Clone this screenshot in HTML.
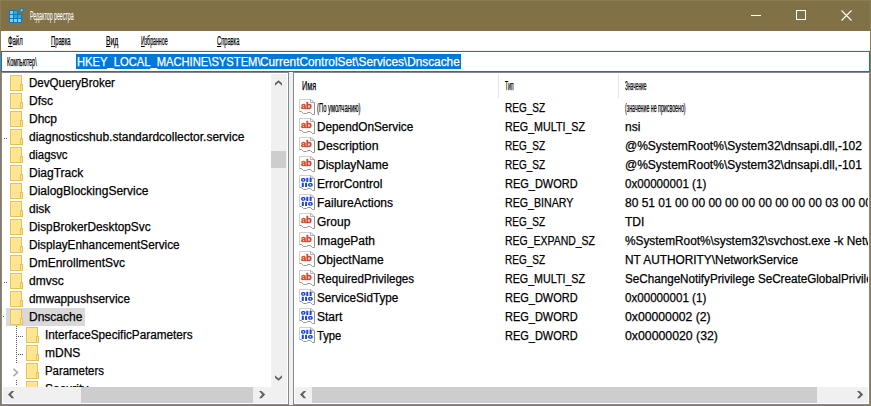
<!DOCTYPE html>
<html><head><meta charset="utf-8">
<style>
*{margin:0;padding:0;box-sizing:border-box}
html,body{width:871px;height:406px;overflow:hidden;background:#8a7d55}
#tb{position:absolute;left:1px;top:1px;width:869px;height:30px;background:#807246}
body{position:relative;font-family:"Liberation Sans",sans-serif;font-size:12px;color:#000}
.a{position:absolute}
.t{position:absolute;white-space:nowrap;line-height:14px;-webkit-text-stroke:0.25px currentColor}
u{text-decoration:underline;text-underline-offset:1px;text-decoration-thickness:1px}
.clip{position:absolute;overflow:hidden}
</style></head><body><div id="tb"></div>

<svg class="a" style="left:0;top:0" width="30" height="30"><path d="M9 10 H18 V14 H22 V23 H9 Z" fill="#1479bb"/><rect x="10" y="11" width="3" height="3" fill="#74d3fa"/><rect x="14" y="11" width="3" height="3" fill="#2aaee6"/><rect x="10" y="15" width="3" height="3" fill="#74d3fa"/><rect x="14" y="15" width="3" height="3" fill="#24a9e2"/><rect x="18" y="15" width="3" height="3" fill="#2aaee6"/><rect x="10" y="19" width="3" height="3" fill="#74d3fa"/><rect x="14" y="19" width="3" height="3" fill="#74d3fa"/><rect x="18" y="19" width="3" height="3" fill="#74d3fa"/><polygon points="21.7,7.4 24.6,10.3 21.7,13.2 18.8,10.3" fill="#1479bb"/><polygon points="21.7,8.8 23.2,10.3 21.7,11.8 20.2,10.3" fill="#74d3fa"/></svg>
<div class="t" style="left:30px;top:9px;color:#fff;-webkit-text-stroke:0.1px #fff;transform:scaleX(0.4364);transform-origin:0 0">Редактор реестра</div>
<div class="a" style="left:751px;top:15px;width:10px;height:1px;background:#fff"></div>
<div class="a" style="left:796px;top:10px;width:10px;height:10px;border:1px solid #fff"></div>
<svg class="a" style="left:841px;top:10px" width="11" height="11" viewBox="0 0 11 11"><path d="M0.5 0.5 L10.5 10.5 M10.5 0.5 L0.5 10.5" stroke="#fff" stroke-width="1.1"/></svg>
<div class="a" style="left:1px;top:31px;width:869px;height:374px;background:#fff"></div>
<div class="a" style="left:1px;top:50px;width:869px;height:1px;background:#f0f0f0"></div>
<div class="t" style="left:8px;top:34px;transform:scaleX(0.4982);transform-origin:0 0"><u>Ф</u>айл</div>
<div class="t" style="left:51px;top:34px;transform:scaleX(0.4821);transform-origin:0 0"><u>П</u>равка</div>
<div class="t" style="left:106px;top:34px;transform:scaleX(0.5667);transform-origin:0 0"><u>В</u>ид</div>
<div class="t" style="left:141px;top:34px;transform:scaleX(0.4376);transform-origin:0 0"><u>И</u>збранное</div>
<div class="t" style="left:217px;top:34px;transform:scaleX(0.4760);transform-origin:0 0"><u>С</u>правка</div>
<div class="a" style="left:1px;top:51px;width:869px;height:21px;border:1px solid #0078d7"></div>
<div class="t" style="left:7px;top:55px;transform:scaleX(0.4530);transform-origin:0 0">Компьютер\</div>
<div class="a" style="left:76px;top:54px;width:385px;height:15px;background:#0078d7"></div>
<div class="t" style="left:76.5px;top:55px;color:#fff;transform:scaleX(0.933);transform-origin:0 0">HKEY_LOCAL_MACHINE\SYSTEM\</div>
<div class="t" style="left:260px;top:55px;color:#fff;transform:scaleX(0.985);transform-origin:0 0">CurrentControlSet\Services\Dnscache</div>
<div class="a" style="left:1px;top:72px;width:288px;height:333px;background:#828790"></div>
<div class="a" style="left:2px;top:73px;width:286px;height:331px;background:#fff"></div>
<div class="a" style="left:289px;top:72px;width:4px;height:333px;background:#f0f0f0"></div>
<div class="a" style="left:293px;top:72px;width:577px;height:333px;background:#828790"></div>
<div class="a" style="left:294px;top:73px;width:575px;height:331px;background:#fff"></div>
<div class="clip" style="left:3px;top:74px;width:268px;height:313px">
<svg class="a" style="left:7px;top:1px" width="13" height="16"><rect x="0.5" y="0.5" width="11" height="15" fill="#fde594" stroke="#e7c153"/><rect x="1.5" y="1.5" width="9" height="13" fill="none" stroke="#fee9a4" stroke-width="0.6"/><rect x="10.5" y="9.5" width="2" height="6" fill="#fde594" stroke="#e7c153"/></svg>
<div class="t" style="left:26px;top:2px;transform:scaleX(0.9618);transform-origin:0 0">DevQueryBroker</div>
<svg class="a" style="left:7px;top:19px" width="13" height="16"><rect x="0.5" y="0.5" width="11" height="15" fill="#fde594" stroke="#e7c153"/><rect x="1.5" y="1.5" width="9" height="13" fill="none" stroke="#fee9a4" stroke-width="0.6"/><rect x="10.5" y="9.5" width="2" height="6" fill="#fde594" stroke="#e7c153"/></svg>
<div class="t" style="left:26px;top:20px">Dfsc</div>
<svg class="a" style="left:7px;top:37px" width="13" height="16"><rect x="0.5" y="0.5" width="11" height="15" fill="#fde594" stroke="#e7c153"/><rect x="1.5" y="1.5" width="9" height="13" fill="none" stroke="#fee9a4" stroke-width="0.6"/><rect x="10.5" y="9.5" width="2" height="6" fill="#fde594" stroke="#e7c153"/></svg>
<div class="t" style="left:26px;top:38px">Dhcp</div>
<svg class="a" style="left:7px;top:55px" width="13" height="16"><rect x="0.5" y="0.5" width="11" height="15" fill="#fde594" stroke="#e7c153"/><rect x="1.5" y="1.5" width="9" height="13" fill="none" stroke="#fee9a4" stroke-width="0.6"/><rect x="10.5" y="9.5" width="2" height="6" fill="#fde594" stroke="#e7c153"/></svg>
<div class="t" style="left:26px;top:56px">diagnosticshub.standardcollector.service</div>
<svg class="a" style="left:7px;top:73px" width="13" height="16"><rect x="0.5" y="0.5" width="11" height="15" fill="#fde594" stroke="#e7c153"/><rect x="1.5" y="1.5" width="9" height="13" fill="none" stroke="#fee9a4" stroke-width="0.6"/><rect x="10.5" y="9.5" width="2" height="6" fill="#fde594" stroke="#e7c153"/></svg>
<div class="t" style="left:26px;top:74px;transform:scaleX(0.9463);transform-origin:0 0">diagsvc</div>
<svg class="a" style="left:7px;top:91px" width="13" height="16"><rect x="0.5" y="0.5" width="11" height="15" fill="#fde594" stroke="#e7c153"/><rect x="1.5" y="1.5" width="9" height="13" fill="none" stroke="#fee9a4" stroke-width="0.6"/><rect x="10.5" y="9.5" width="2" height="6" fill="#fde594" stroke="#e7c153"/></svg>
<div class="t" style="left:26px;top:92px">DiagTrack</div>
<svg class="a" style="left:7px;top:109px" width="13" height="16"><rect x="0.5" y="0.5" width="11" height="15" fill="#fde594" stroke="#e7c153"/><rect x="1.5" y="1.5" width="9" height="13" fill="none" stroke="#fee9a4" stroke-width="0.6"/><rect x="10.5" y="9.5" width="2" height="6" fill="#fde594" stroke="#e7c153"/></svg>
<div class="t" style="left:26px;top:110px">DialogBlockingService</div>
<svg class="a" style="left:7px;top:127px" width="13" height="16"><rect x="0.5" y="0.5" width="11" height="15" fill="#fde594" stroke="#e7c153"/><rect x="1.5" y="1.5" width="9" height="13" fill="none" stroke="#fee9a4" stroke-width="0.6"/><rect x="10.5" y="9.5" width="2" height="6" fill="#fde594" stroke="#e7c153"/></svg>
<div class="t" style="left:26px;top:128px">disk</div>
<svg class="a" style="left:7px;top:145px" width="13" height="16"><rect x="0.5" y="0.5" width="11" height="15" fill="#fde594" stroke="#e7c153"/><rect x="1.5" y="1.5" width="9" height="13" fill="none" stroke="#fee9a4" stroke-width="0.6"/><rect x="10.5" y="9.5" width="2" height="6" fill="#fde594" stroke="#e7c153"/></svg>
<div class="t" style="left:26px;top:146px;transform:scaleX(0.9852);transform-origin:0 0">DispBrokerDesktopSvc</div>
<svg class="a" style="left:7px;top:163px" width="13" height="16"><rect x="0.5" y="0.5" width="11" height="15" fill="#fde594" stroke="#e7c153"/><rect x="1.5" y="1.5" width="9" height="13" fill="none" stroke="#fee9a4" stroke-width="0.6"/><rect x="10.5" y="9.5" width="2" height="6" fill="#fde594" stroke="#e7c153"/></svg>
<div class="t" style="left:26px;top:164px;transform:scaleX(0.9816);transform-origin:0 0">DisplayEnhancementService</div>
<svg class="a" style="left:7px;top:181px" width="13" height="16"><rect x="0.5" y="0.5" width="11" height="15" fill="#fde594" stroke="#e7c153"/><rect x="1.5" y="1.5" width="9" height="13" fill="none" stroke="#fee9a4" stroke-width="0.6"/><rect x="10.5" y="9.5" width="2" height="6" fill="#fde594" stroke="#e7c153"/></svg>
<div class="t" style="left:26px;top:182px">DmEnrollmentSvc</div>
<svg class="a" style="left:7px;top:199px" width="13" height="16"><rect x="0.5" y="0.5" width="11" height="15" fill="#fde594" stroke="#e7c153"/><rect x="1.5" y="1.5" width="9" height="13" fill="none" stroke="#fee9a4" stroke-width="0.6"/><rect x="10.5" y="9.5" width="2" height="6" fill="#fde594" stroke="#e7c153"/></svg>
<div class="t" style="left:26px;top:200px">dmvsc</div>
<svg class="a" style="left:7px;top:217px" width="13" height="16"><rect x="0.5" y="0.5" width="11" height="15" fill="#fde594" stroke="#e7c153"/><rect x="1.5" y="1.5" width="9" height="13" fill="none" stroke="#fee9a4" stroke-width="0.6"/><rect x="10.5" y="9.5" width="2" height="6" fill="#fde594" stroke="#e7c153"/></svg>
<div class="t" style="left:26px;top:218px;transform:scaleX(0.9835);transform-origin:0 0">dmwappushservice</div>
<div class="a" style="left:3px;top:234px;width:79px;height:18px;background:#d9d9d9"></div>
<svg class="a" style="left:7px;top:235px" width="13" height="16"><rect x="0.5" y="0.5" width="11" height="15" fill="#fde594" stroke="#e7c153"/><rect x="1.5" y="1.5" width="9" height="13" fill="none" stroke="#fee9a4" stroke-width="0.6"/><rect x="10.5" y="9.5" width="2" height="6" fill="#fde594" stroke="#e7c153"/></svg>
<div class="t" style="left:26px;top:236px">Dnscache</div>
<svg class="a" style="left:23px;top:253px" width="13" height="16"><rect x="0.5" y="0.5" width="11" height="15" fill="#fde594" stroke="#e7c153"/><rect x="1.5" y="1.5" width="9" height="13" fill="none" stroke="#fee9a4" stroke-width="0.6"/><rect x="10.5" y="9.5" width="2" height="6" fill="#fde594" stroke="#e7c153"/></svg>
<div class="t" style="left:42px;top:254px;transform:scaleX(0.9793);transform-origin:0 0">InterfaceSpecificParameters</div>
<svg class="a" style="left:23px;top:271px" width="13" height="16"><rect x="0.5" y="0.5" width="11" height="15" fill="#fde594" stroke="#e7c153"/><rect x="1.5" y="1.5" width="9" height="13" fill="none" stroke="#fee9a4" stroke-width="0.6"/><rect x="10.5" y="9.5" width="2" height="6" fill="#fde594" stroke="#e7c153"/></svg>
<div class="t" style="left:42px;top:272px">mDNS</div>
<svg class="a" style="left:23px;top:289px" width="13" height="16"><rect x="0.5" y="0.5" width="11" height="15" fill="#fde594" stroke="#e7c153"/><rect x="1.5" y="1.5" width="9" height="13" fill="none" stroke="#fee9a4" stroke-width="0.6"/><rect x="10.5" y="9.5" width="2" height="6" fill="#fde594" stroke="#e7c153"/></svg>
<div class="t" style="left:42px;top:290px;transform:scaleX(0.9508);transform-origin:0 0">Parameters</div>
<svg class="a" style="left:23px;top:307px" width="13" height="16"><rect x="0.5" y="0.5" width="11" height="15" fill="#fde594" stroke="#e7c153"/><rect x="1.5" y="1.5" width="9" height="13" fill="none" stroke="#fee9a4" stroke-width="0.6"/><rect x="10.5" y="9.5" width="2" height="6" fill="#fde594" stroke="#e7c153"/></svg>
<div class="t" style="left:42px;top:308px">Security</div>
<div class="a" style="left:1px;top:64px;width:1px;height:1px;background:#5a5a5a"></div>
<div class="a" style="left:3px;top:64px;width:1px;height:1px;background:#5a5a5a"></div>
<div class="a" style="left:1px;top:208px;width:1px;height:1px;background:#5a5a5a"></div>
<div class="a" style="left:3px;top:208px;width:1px;height:1px;background:#5a5a5a"></div>
<div class="a" style="left:0px;top:242px;width:1px;height:1px;background:#5a5a5a"></div>
<div class="a" style="left:13px;top:252px;width:1px;height:1px;background:#5a5a5a"></div>
<div class="a" style="left:13px;top:254px;width:1px;height:1px;background:#5a5a5a"></div>
<div class="a" style="left:13px;top:256px;width:1px;height:1px;background:#5a5a5a"></div>
<div class="a" style="left:13px;top:258px;width:1px;height:1px;background:#5a5a5a"></div>
<div class="a" style="left:13px;top:260px;width:1px;height:1px;background:#5a5a5a"></div>
<div class="a" style="left:13px;top:262px;width:1px;height:1px;background:#5a5a5a"></div>
<div class="a" style="left:13px;top:264px;width:1px;height:1px;background:#5a5a5a"></div>
<div class="a" style="left:13px;top:266px;width:1px;height:1px;background:#5a5a5a"></div>
<div class="a" style="left:13px;top:268px;width:1px;height:1px;background:#5a5a5a"></div>
<div class="a" style="left:13px;top:270px;width:1px;height:1px;background:#5a5a5a"></div>
<div class="a" style="left:13px;top:272px;width:1px;height:1px;background:#5a5a5a"></div>
<div class="a" style="left:13px;top:274px;width:1px;height:1px;background:#5a5a5a"></div>
<div class="a" style="left:13px;top:276px;width:1px;height:1px;background:#5a5a5a"></div>
<div class="a" style="left:13px;top:278px;width:1px;height:1px;background:#5a5a5a"></div>
<div class="a" style="left:13px;top:280px;width:1px;height:1px;background:#5a5a5a"></div>
<div class="a" style="left:13px;top:282px;width:1px;height:1px;background:#5a5a5a"></div>
<div class="a" style="left:13px;top:284px;width:1px;height:1px;background:#5a5a5a"></div>
<div class="a" style="left:13px;top:286px;width:1px;height:1px;background:#5a5a5a"></div>
<div class="a" style="left:13px;top:288px;width:1px;height:1px;background:#5a5a5a"></div>
<div class="a" style="left:13px;top:306px;width:1px;height:1px;background:#5a5a5a"></div>
<div class="a" style="left:13px;top:308px;width:1px;height:1px;background:#5a5a5a"></div>
<div class="a" style="left:13px;top:310px;width:1px;height:1px;background:#5a5a5a"></div>
<div class="a" style="left:15px;top:262px;width:1px;height:1px;background:#5a5a5a"></div>
<div class="a" style="left:17px;top:262px;width:1px;height:1px;background:#5a5a5a"></div>
<div class="a" style="left:19px;top:262px;width:1px;height:1px;background:#5a5a5a"></div>
<div class="a" style="left:15px;top:280px;width:1px;height:1px;background:#5a5a5a"></div>
<div class="a" style="left:17px;top:280px;width:1px;height:1px;background:#5a5a5a"></div>
<div class="a" style="left:19px;top:280px;width:1px;height:1px;background:#5a5a5a"></div>
<svg class="a" style="left:10px;top:294px" width="8" height="10"><polygon points="0,1.5 1,0.3 5.6,4.5 1,8.7 0,7.5 3.4,4.5" fill="#a6a6a6"/></svg>
</div>
<div class="a" style="left:271px;top:74px;width:16px;height:329px;background:#f0f0f0"></div>
<div class="a" style="left:271px;top:151px;width:15px;height:17px;background:#cdcdcd"></div>
<div class="a" style="left:3px;top:387px;width:268px;height:16px;background:#f0f0f0"></div>
<div class="a" style="left:81px;top:387px;width:172px;height:16px;background:#cdcdcd"></div>
<svg class="a" style="left:275px;top:80px" width="7" height="6"><polygon points="0,3.3 3.5,0.2 7,3.3 7,5.8 3.5,2.6 0,5.8" fill="#606060"/></svg>
<svg class="a" style="left:275px;top:375px" width="7" height="6"><polygon points="0,0.2 3.5,3.4 7,0.2 7,2.7 3.5,5.8 0,2.7" fill="#606060"/></svg>
<svg class="a" style="left:8px;top:391px" width="7" height="8"><polygon points="6.2,0 3,3.6 6.2,7.2 3.7,7.2 0,3.6 3.7,0" fill="#606060"/></svg>
<svg class="a" style="left:259px;top:391px" width="7" height="8"><polygon points="0,0 3.2,3.6 0,7.2 2.5,7.2 6.2,3.6 2.5,0" fill="#606060"/></svg>
<div class="clip" style="left:295px;top:74px;width:573px;height:313px">
<div class="t" style="left:6.5px;top:5px;transform:scaleX(0.6051);transform-origin:0 0">Имя</div>
<div class="a" style="left:203px;top:0px;width:1px;height:24px;background:#e5e5e5"></div>
<div class="t" style="left:210px;top:5px;transform:scaleX(0.4318);transform-origin:0 0">Тип</div>
<div class="a" style="left:323px;top:0px;width:1px;height:24px;background:#e5e5e5"></div>
<div class="t" style="left:330px;top:5px;transform:scaleX(0.4031);transform-origin:0 0">Значение</div>
<svg class="a" style="left:4px;top:25px" width="16" height="16" viewBox="0 0 16 16"><path d="M0 0 H12 L16 4 V16 L13.5 15.5 L11.5 13.5 L9 13.5 L7.5 14.5 L4.5 14.5 L2.5 12.5 H0 Z" fill="#fff"/><path d="M0.5 12.5 V0.5 H12" fill="none" stroke="#d0d0d0"/><path d="M12 0.5 L15.5 4" fill="none" stroke="#a0a0a0"/><path d="M11.5 0.5 V3.5 H15" fill="none" stroke="#b0b0b0"/><path d="M15.5 3.5 V15.5 H13.5 L11.5 13.5 H9 L7.5 14.5 H4.5 L2.5 12.5 H0.5" fill="none" stroke="#959595"/><text x="2" y="10" font-family="Liberation Sans" font-weight="bold" font-size="9.4" fill="#d0401a" stroke="#d0401a" stroke-width="0.35" letter-spacing="-0.25">ab</text></svg>
<div class="t" style="left:22px;top:27px;transform:scaleX(0.4879);transform-origin:0 0">(По умолчанию)</div>
<div class="t" style="left:210px;top:27px;transform:scaleX(0.8340);transform-origin:0 0">REG_SZ</div>
<div class="t" style="left:330px;top:27px;transform:scaleX(0.4387);transform-origin:0 0">(значение не присвоено)</div>
<svg class="a" style="left:4px;top:44px" width="16" height="16" viewBox="0 0 16 16"><path d="M0 0 H12 L16 4 V16 L13.5 15.5 L11.5 13.5 L9 13.5 L7.5 14.5 L4.5 14.5 L2.5 12.5 H0 Z" fill="#fff"/><path d="M0.5 12.5 V0.5 H12" fill="none" stroke="#d0d0d0"/><path d="M12 0.5 L15.5 4" fill="none" stroke="#a0a0a0"/><path d="M11.5 0.5 V3.5 H15" fill="none" stroke="#b0b0b0"/><path d="M15.5 3.5 V15.5 H13.5 L11.5 13.5 H9 L7.5 14.5 H4.5 L2.5 12.5 H0.5" fill="none" stroke="#959595"/><text x="2" y="10" font-family="Liberation Sans" font-weight="bold" font-size="9.4" fill="#d0401a" stroke="#d0401a" stroke-width="0.35" letter-spacing="-0.25">ab</text></svg>
<div class="t" style="left:22px;top:46px;transform:scaleX(0.9814);transform-origin:0 0">DependOnService</div>
<div class="t" style="left:210px;top:46px;transform:scaleX(0.8910);transform-origin:0 0">REG_MULTI_SZ</div>
<div class="t" style="left:330px;top:46px">nsi</div>
<svg class="a" style="left:4px;top:63px" width="16" height="16" viewBox="0 0 16 16"><path d="M0 0 H12 L16 4 V16 L13.5 15.5 L11.5 13.5 L9 13.5 L7.5 14.5 L4.5 14.5 L2.5 12.5 H0 Z" fill="#fff"/><path d="M0.5 12.5 V0.5 H12" fill="none" stroke="#d0d0d0"/><path d="M12 0.5 L15.5 4" fill="none" stroke="#a0a0a0"/><path d="M11.5 0.5 V3.5 H15" fill="none" stroke="#b0b0b0"/><path d="M15.5 3.5 V15.5 H13.5 L11.5 13.5 H9 L7.5 14.5 H4.5 L2.5 12.5 H0.5" fill="none" stroke="#959595"/><text x="2" y="10" font-family="Liberation Sans" font-weight="bold" font-size="9.4" fill="#d0401a" stroke="#d0401a" stroke-width="0.35" letter-spacing="-0.25">ab</text></svg>
<div class="t" style="left:22px;top:65px;transform:scaleX(1.0254);transform-origin:0 0">Description</div>
<div class="t" style="left:210px;top:65px;transform:scaleX(0.8340);transform-origin:0 0">REG_SZ</div>
<div class="t" style="left:330px;top:65px">@%SystemRoot%\System32\dnsapi.dll,-102</div>
<svg class="a" style="left:4px;top:82px" width="16" height="16" viewBox="0 0 16 16"><path d="M0 0 H12 L16 4 V16 L13.5 15.5 L11.5 13.5 L9 13.5 L7.5 14.5 L4.5 14.5 L2.5 12.5 H0 Z" fill="#fff"/><path d="M0.5 12.5 V0.5 H12" fill="none" stroke="#d0d0d0"/><path d="M12 0.5 L15.5 4" fill="none" stroke="#a0a0a0"/><path d="M11.5 0.5 V3.5 H15" fill="none" stroke="#b0b0b0"/><path d="M15.5 3.5 V15.5 H13.5 L11.5 13.5 H9 L7.5 14.5 H4.5 L2.5 12.5 H0.5" fill="none" stroke="#959595"/><text x="2" y="10" font-family="Liberation Sans" font-weight="bold" font-size="9.4" fill="#d0401a" stroke="#d0401a" stroke-width="0.35" letter-spacing="-0.25">ab</text></svg>
<div class="t" style="left:22px;top:84px">DisplayName</div>
<div class="t" style="left:210px;top:84px;transform:scaleX(0.8340);transform-origin:0 0">REG_SZ</div>
<div class="t" style="left:330px;top:84px">@%SystemRoot%\System32\dnsapi.dll,-101</div>
<svg class="a" style="left:4px;top:101px" width="16" height="16" viewBox="0 0 16 16"><path d="M0 0 H12 L16 4 V16 L13.5 15.5 L11.5 13.5 L9 13.5 L7.5 14.5 L4.5 14.5 L2.5 12.5 H0 Z" fill="#fff"/><path d="M0.5 12.5 V0.5 H12" fill="none" stroke="#d0d0d0"/><path d="M12 0.5 L15.5 4" fill="none" stroke="#a0a0a0"/><path d="M11.5 0.5 V3.5 H15" fill="none" stroke="#b0b0b0"/><path d="M15.5 3.5 V15.5 H13.5 L11.5 13.5 H9 L7.5 14.5 H4.5 L2.5 12.5 H0.5" fill="none" stroke="#959595"/><g fill="#1a45d6"><rect x="2" y="3" width="4.6" height="3.8" rx="1.7"/><rect x="7.3" y="2.8" width="2" height="4.2"/><rect x="10.6" y="2.8" width="2" height="4.2"/><rect x="2.8" y="7.8" width="2" height="4.2"/><rect x="6.1" y="7.8" width="2" height="4.2"/><rect x="9" y="8" width="4.8" height="3.8" rx="1.7"/></g><g fill="#fff"><rect x="3.6" y="4.3" width="1.4" height="1.2"/><rect x="10.7" y="9.3" width="1.4" height="1.2"/></g></svg>
<div class="t" style="left:22px;top:103px">ErrorControl</div>
<div class="t" style="left:210px;top:103px;transform:scaleX(0.9154);transform-origin:0 0">REG_DWORD</div>
<div class="t" style="left:330px;top:103px;transform:scaleX(0.9667);transform-origin:0 0">0x00000001 (1)</div>
<svg class="a" style="left:4px;top:120px" width="16" height="16" viewBox="0 0 16 16"><path d="M0 0 H12 L16 4 V16 L13.5 15.5 L11.5 13.5 L9 13.5 L7.5 14.5 L4.5 14.5 L2.5 12.5 H0 Z" fill="#fff"/><path d="M0.5 12.5 V0.5 H12" fill="none" stroke="#d0d0d0"/><path d="M12 0.5 L15.5 4" fill="none" stroke="#a0a0a0"/><path d="M11.5 0.5 V3.5 H15" fill="none" stroke="#b0b0b0"/><path d="M15.5 3.5 V15.5 H13.5 L11.5 13.5 H9 L7.5 14.5 H4.5 L2.5 12.5 H0.5" fill="none" stroke="#959595"/><g fill="#1a45d6"><rect x="2" y="3" width="4.6" height="3.8" rx="1.7"/><rect x="7.3" y="2.8" width="2" height="4.2"/><rect x="10.6" y="2.8" width="2" height="4.2"/><rect x="2.8" y="7.8" width="2" height="4.2"/><rect x="6.1" y="7.8" width="2" height="4.2"/><rect x="9" y="8" width="4.8" height="3.8" rx="1.7"/></g><g fill="#fff"><rect x="3.6" y="4.3" width="1.4" height="1.2"/><rect x="10.7" y="9.3" width="1.4" height="1.2"/></g></svg>
<div class="t" style="left:22px;top:122px">FailureActions</div>
<div class="t" style="left:210px;top:122px;transform:scaleX(0.8868);transform-origin:0 0">REG_BINARY</div>
<div class="t" style="left:330px;top:122px">80 51 01 00 00 00 00 00 00 00 00 00 03 00 00 00 14 00 00 00</div>
<svg class="a" style="left:4px;top:139px" width="16" height="16" viewBox="0 0 16 16"><path d="M0 0 H12 L16 4 V16 L13.5 15.5 L11.5 13.5 L9 13.5 L7.5 14.5 L4.5 14.5 L2.5 12.5 H0 Z" fill="#fff"/><path d="M0.5 12.5 V0.5 H12" fill="none" stroke="#d0d0d0"/><path d="M12 0.5 L15.5 4" fill="none" stroke="#a0a0a0"/><path d="M11.5 0.5 V3.5 H15" fill="none" stroke="#b0b0b0"/><path d="M15.5 3.5 V15.5 H13.5 L11.5 13.5 H9 L7.5 14.5 H4.5 L2.5 12.5 H0.5" fill="none" stroke="#959595"/><text x="2" y="10" font-family="Liberation Sans" font-weight="bold" font-size="9.4" fill="#d0401a" stroke="#d0401a" stroke-width="0.35" letter-spacing="-0.25">ab</text></svg>
<div class="t" style="left:22px;top:141px">Group</div>
<div class="t" style="left:210px;top:141px;transform:scaleX(0.8340);transform-origin:0 0">REG_SZ</div>
<div class="t" style="left:330px;top:141px">TDI</div>
<svg class="a" style="left:4px;top:158px" width="16" height="16" viewBox="0 0 16 16"><path d="M0 0 H12 L16 4 V16 L13.5 15.5 L11.5 13.5 L9 13.5 L7.5 14.5 L4.5 14.5 L2.5 12.5 H0 Z" fill="#fff"/><path d="M0.5 12.5 V0.5 H12" fill="none" stroke="#d0d0d0"/><path d="M12 0.5 L15.5 4" fill="none" stroke="#a0a0a0"/><path d="M11.5 0.5 V3.5 H15" fill="none" stroke="#b0b0b0"/><path d="M15.5 3.5 V15.5 H13.5 L11.5 13.5 H9 L7.5 14.5 H4.5 L2.5 12.5 H0.5" fill="none" stroke="#959595"/><text x="2" y="10" font-family="Liberation Sans" font-weight="bold" font-size="9.4" fill="#d0401a" stroke="#d0401a" stroke-width="0.35" letter-spacing="-0.25">ab</text></svg>
<div class="t" style="left:22px;top:160px">ImagePath</div>
<div class="t" style="left:210px;top:160px;transform:scaleX(0.8725);transform-origin:0 0">REG_EXPAND_SZ</div>
<div class="t" style="left:330px;top:160px;transform:scaleX(0.9870);transform-origin:0 0">%SystemRoot%\system32\svchost.exe -k NetworkService -p</div>
<svg class="a" style="left:4px;top:177px" width="16" height="16" viewBox="0 0 16 16"><path d="M0 0 H12 L16 4 V16 L13.5 15.5 L11.5 13.5 L9 13.5 L7.5 14.5 L4.5 14.5 L2.5 12.5 H0 Z" fill="#fff"/><path d="M0.5 12.5 V0.5 H12" fill="none" stroke="#d0d0d0"/><path d="M12 0.5 L15.5 4" fill="none" stroke="#a0a0a0"/><path d="M11.5 0.5 V3.5 H15" fill="none" stroke="#b0b0b0"/><path d="M15.5 3.5 V15.5 H13.5 L11.5 13.5 H9 L7.5 14.5 H4.5 L2.5 12.5 H0.5" fill="none" stroke="#959595"/><text x="2" y="10" font-family="Liberation Sans" font-weight="bold" font-size="9.4" fill="#d0401a" stroke="#d0401a" stroke-width="0.35" letter-spacing="-0.25">ab</text></svg>
<div class="t" style="left:22px;top:179px">ObjectName</div>
<div class="t" style="left:210px;top:179px;transform:scaleX(0.8340);transform-origin:0 0">REG_SZ</div>
<div class="t" style="left:330px;top:179px;transform:scaleX(0.9885);transform-origin:0 0">NT AUTHORITY\NetworkService</div>
<svg class="a" style="left:4px;top:196px" width="16" height="16" viewBox="0 0 16 16"><path d="M0 0 H12 L16 4 V16 L13.5 15.5 L11.5 13.5 L9 13.5 L7.5 14.5 L4.5 14.5 L2.5 12.5 H0 Z" fill="#fff"/><path d="M0.5 12.5 V0.5 H12" fill="none" stroke="#d0d0d0"/><path d="M12 0.5 L15.5 4" fill="none" stroke="#a0a0a0"/><path d="M11.5 0.5 V3.5 H15" fill="none" stroke="#b0b0b0"/><path d="M15.5 3.5 V15.5 H13.5 L11.5 13.5 H9 L7.5 14.5 H4.5 L2.5 12.5 H0.5" fill="none" stroke="#959595"/><text x="2" y="10" font-family="Liberation Sans" font-weight="bold" font-size="9.4" fill="#d0401a" stroke="#d0401a" stroke-width="0.35" letter-spacing="-0.25">ab</text></svg>
<div class="t" style="left:22px;top:198px;transform:scaleX(0.9640);transform-origin:0 0">RequiredPrivileges</div>
<div class="t" style="left:210px;top:198px;transform:scaleX(0.8910);transform-origin:0 0">REG_MULTI_SZ</div>
<div class="t" style="left:330px;top:198px;transform:scaleX(0.9720);transform-origin:0 0">SeChangeNotifyPrivilege SeCreateGlobalPrivilege SeImpersonatePrivilege</div>
<svg class="a" style="left:4px;top:215px" width="16" height="16" viewBox="0 0 16 16"><path d="M0 0 H12 L16 4 V16 L13.5 15.5 L11.5 13.5 L9 13.5 L7.5 14.5 L4.5 14.5 L2.5 12.5 H0 Z" fill="#fff"/><path d="M0.5 12.5 V0.5 H12" fill="none" stroke="#d0d0d0"/><path d="M12 0.5 L15.5 4" fill="none" stroke="#a0a0a0"/><path d="M11.5 0.5 V3.5 H15" fill="none" stroke="#b0b0b0"/><path d="M15.5 3.5 V15.5 H13.5 L11.5 13.5 H9 L7.5 14.5 H4.5 L2.5 12.5 H0.5" fill="none" stroke="#959595"/><g fill="#1a45d6"><rect x="2" y="3" width="4.6" height="3.8" rx="1.7"/><rect x="7.3" y="2.8" width="2" height="4.2"/><rect x="10.6" y="2.8" width="2" height="4.2"/><rect x="2.8" y="7.8" width="2" height="4.2"/><rect x="6.1" y="7.8" width="2" height="4.2"/><rect x="9" y="8" width="4.8" height="3.8" rx="1.7"/></g><g fill="#fff"><rect x="3.6" y="4.3" width="1.4" height="1.2"/><rect x="10.7" y="9.3" width="1.4" height="1.2"/></g></svg>
<div class="t" style="left:22px;top:217px;transform:scaleX(0.9744);transform-origin:0 0">ServiceSidType</div>
<div class="t" style="left:210px;top:217px;transform:scaleX(0.9154);transform-origin:0 0">REG_DWORD</div>
<div class="t" style="left:330px;top:217px;transform:scaleX(0.9667);transform-origin:0 0">0x00000001 (1)</div>
<svg class="a" style="left:4px;top:234px" width="16" height="16" viewBox="0 0 16 16"><path d="M0 0 H12 L16 4 V16 L13.5 15.5 L11.5 13.5 L9 13.5 L7.5 14.5 L4.5 14.5 L2.5 12.5 H0 Z" fill="#fff"/><path d="M0.5 12.5 V0.5 H12" fill="none" stroke="#d0d0d0"/><path d="M12 0.5 L15.5 4" fill="none" stroke="#a0a0a0"/><path d="M11.5 0.5 V3.5 H15" fill="none" stroke="#b0b0b0"/><path d="M15.5 3.5 V15.5 H13.5 L11.5 13.5 H9 L7.5 14.5 H4.5 L2.5 12.5 H0.5" fill="none" stroke="#959595"/><g fill="#1a45d6"><rect x="2" y="3" width="4.6" height="3.8" rx="1.7"/><rect x="7.3" y="2.8" width="2" height="4.2"/><rect x="10.6" y="2.8" width="2" height="4.2"/><rect x="2.8" y="7.8" width="2" height="4.2"/><rect x="6.1" y="7.8" width="2" height="4.2"/><rect x="9" y="8" width="4.8" height="3.8" rx="1.7"/></g><g fill="#fff"><rect x="3.6" y="4.3" width="1.4" height="1.2"/><rect x="10.7" y="9.3" width="1.4" height="1.2"/></g></svg>
<div class="t" style="left:22px;top:236px">Start</div>
<div class="t" style="left:210px;top:236px;transform:scaleX(0.9154);transform-origin:0 0">REG_DWORD</div>
<div class="t" style="left:330px;top:236px;transform:scaleX(1.0190);transform-origin:0 0">0x00000002 (2)</div>
<svg class="a" style="left:4px;top:253px" width="16" height="16" viewBox="0 0 16 16"><path d="M0 0 H12 L16 4 V16 L13.5 15.5 L11.5 13.5 L9 13.5 L7.5 14.5 L4.5 14.5 L2.5 12.5 H0 Z" fill="#fff"/><path d="M0.5 12.5 V0.5 H12" fill="none" stroke="#d0d0d0"/><path d="M12 0.5 L15.5 4" fill="none" stroke="#a0a0a0"/><path d="M11.5 0.5 V3.5 H15" fill="none" stroke="#b0b0b0"/><path d="M15.5 3.5 V15.5 H13.5 L11.5 13.5 H9 L7.5 14.5 H4.5 L2.5 12.5 H0.5" fill="none" stroke="#959595"/><g fill="#1a45d6"><rect x="2" y="3" width="4.6" height="3.8" rx="1.7"/><rect x="7.3" y="2.8" width="2" height="4.2"/><rect x="10.6" y="2.8" width="2" height="4.2"/><rect x="2.8" y="7.8" width="2" height="4.2"/><rect x="6.1" y="7.8" width="2" height="4.2"/><rect x="9" y="8" width="4.8" height="3.8" rx="1.7"/></g><g fill="#fff"><rect x="3.6" y="4.3" width="1.4" height="1.2"/><rect x="10.7" y="9.3" width="1.4" height="1.2"/></g></svg>
<div class="t" style="left:22px;top:255px;transform:scaleX(0.9346);transform-origin:0 0">Type</div>
<div class="t" style="left:210px;top:255px;transform:scaleX(0.9154);transform-origin:0 0">REG_DWORD</div>
<div class="t" style="left:330px;top:255px;transform:scaleX(1.0244);transform-origin:0 0">0x00000020 (32)</div>
</div>
<div class="a" style="left:295px;top:387px;width:573px;height:16px;background:#f0f0f0"></div>
<div class="a" style="left:312px;top:387px;width:505px;height:16px;background:#cdcdcd"></div>
<svg class="a" style="left:300px;top:391px" width="7" height="8"><polygon points="6.2,0 3,3.6 6.2,7.2 3.7,7.2 0,3.6 3.7,0" fill="#606060"/></svg>
<svg class="a" style="left:857px;top:391px" width="7" height="8"><polygon points="0,0 3.2,3.6 0,7.2 2.5,7.2 6.2,3.6 2.5,0" fill="#606060"/></svg>
</body></html>
